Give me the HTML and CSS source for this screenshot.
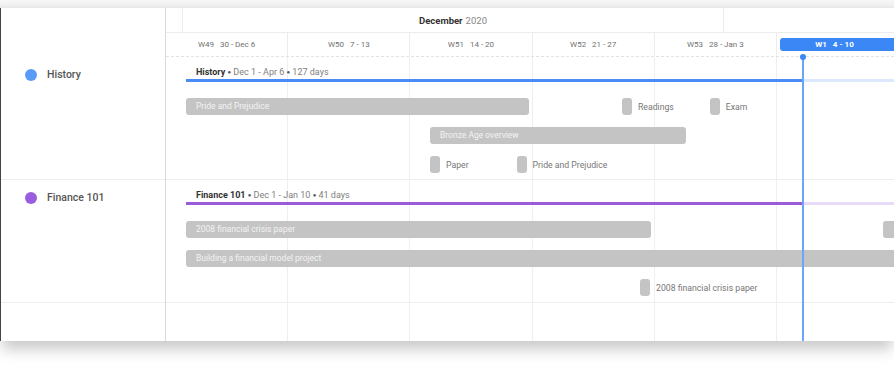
FILE: index.html
```html
<!DOCTYPE html>
<html>
<head>
<meta charset="utf-8">
<link rel="stylesheet" href="styles.css">
</head>
<body>
<div class="page">
  <div class="topstrip"></div>
  <div class="card">
    <aside class="side">
      <div class="side-head"></div>
      <div class="side-row"><span class="dot dot-blue"></span><span class="side-label">History</span></div>
      <div class="side-row"><span class="dot dot-purple"></span><span class="side-label">Finance 101</span></div>
      <div class="side-row side-empty"></div>
    </aside>
    <section class="timeline">
      <div class="month-row">
        <div class="m-cell m-pre"></div>
        <div class="m-cell m-dec"><b>December</b> 2020</div>
        <div class="m-cell m-jan"></div>
      </div>
      <div class="week-row">
        <div class="w-cell">W49&nbsp;&nbsp;&nbsp;30 - Dec 6</div>
        <div class="w-cell">W50&nbsp;&nbsp;&nbsp;7 - 13</div>
        <div class="w-cell">W51&nbsp;&nbsp;&nbsp;14 - 20</div>
        <div class="w-cell">W52&nbsp;&nbsp;&nbsp;21 - 27</div>
        <div class="w-cell">W53&nbsp;&nbsp;&nbsp;28 - Jan 3</div>
        <div class="w-cell w-current"><span class="w-pill">W1&nbsp;&nbsp;&nbsp;4 - 10</span></div>
      </div>
      <div class="body">
        <div class="grid">
          <div class="g-col"></div><div class="g-col"></div><div class="g-col"></div>
          <div class="g-col"></div><div class="g-col"></div><div class="g-col"></div>
        </div>
        <div class="today"><span class="today-dot"></span></div>

        <div class="row">
          <div class="summary"><b>History</b> <span class="sep">●</span> Dec 1 - Apr 6 <span class="sep">●</span> 127 days</div>
          <div class="span-line line-blue"></div>
          <div class="lanes">
            <div class="lane">
              <div class="bar" style="margin-left:20px;width:343px">Pride and Prejudice</div>
              <div class="ms" style="margin-left:93px"><span class="ms-box"></span>Readings</div>
              <div class="ms" style="margin-left:36px"><span class="ms-box"></span>Exam</div>
            </div>
            <div class="lane">
              <div class="bar" style="margin-left:264px;width:256px">Bronze Age overview</div>
            </div>
            <div class="lane">
              <div class="ms" style="margin-left:264px"><span class="ms-box"></span>Paper</div>
              <div class="ms" style="margin-left:48px"><span class="ms-box"></span>Pride and Prejudice</div>
            </div>
          </div>
        </div>

        <div class="row">
          <div class="summary"><b>Finance 101</b> <span class="sep">●</span> Dec 1 - Jan 10 <span class="sep">●</span> 41 days</div>
          <div class="span-line line-purple"></div>
          <div class="lanes">
            <div class="lane">
              <div class="bar" style="margin-left:20px;width:465px">2008 financial crisis paper</div>
              <div class="bar" style="margin-left:232px;width:40px"></div>
            </div>
            <div class="lane">
              <div class="bar" style="margin-left:20px;width:720px">Building a financial model project</div>
            </div>
            <div class="lane">
              <div class="ms" style="margin-left:474px"><span class="ms-box"></span>2008 financial crisis paper</div>
            </div>
          </div>
        </div>

        <div class="row row-empty"></div>
      </div>
    </section>
  </div>
</div>
</body>
</html>
```

FILE: styles.css
```css
* { box-sizing: border-box; }
html, body { margin: 0; padding: 0; background: #fff; }
body {
  font-family: Roboto, "Liberation Sans", Arial, sans-serif;
  width: 894px;
  height: 365px;
  overflow: hidden;
}
.page {
  width: 894px;
  height: 365px;
  background: #fff;
}
.topstrip {
  height: 8px;
  background: linear-gradient(#f7f7f7, #ededed);
  border-bottom: 1px solid #e9e9e9;
}
.card {
  display: flex;
  height: 333px;
  background: #fff;
  border-left: 1px solid #444;
  box-shadow: 0 10px 14px -2px rgba(0,0,0,0.22);
  position: relative;
  overflow: hidden;
}

/* side panel */
.side {
  width: 165px;
  flex: none;
  border-right: 1px solid #d9d9d9;
  display: flex;
  flex-direction: column;
}
.side-head { height: 49px; }
.side-row {
  height: 123px;
  border-bottom: 1px solid #eeeeee;
  display: flex;
  align-items: flex-start;
  padding: 12px 0 0 24px;
  gap: 10px;
}
.side-empty { height: 38px; border-bottom: none; }
.dot {
  width: 12px;
  height: 12px;
  border-radius: 50%;
  flex: none;
}
.dot-blue { background: #5b9bf8; }
.dot-purple { background: #9b5de0; }
.side-label {
  font-size: 10.5px;
  font-weight: 500;
  color: #555;
  line-height: 12px;
}

/* timeline */
.timeline {
  flex: 1;
  min-width: 0;
  display: flex;
  flex-direction: column;
  overflow: hidden;
}
.month-row {
  display: flex;
  height: 25px;
  border-bottom: 1px solid #ececec;
}
.m-cell {
  flex: none;
  border-right: 1px solid #ececec;
  font-size: 9.5px;
  color: #888;
  display: flex;
  align-items: center;
  justify-content: center;
}
.m-cell b { color: #333; font-weight: 700; margin-right: 3px; }
.m-pre { width: 17px; }
.m-dec { width: 541px; }
.m-jan { width: 200px; border-right: none; }

.week-row {
  display: flex;
  height: 24px;
  border-bottom: 1px dashed #e2e2e2;
}
.w-cell {
  flex: none;
  width: 122.2px;
  border-right: 1px solid #ececec;
  font-size: 8px;
  color: #707070;
  display: flex;
  align-items: center;
  justify-content: center;
  white-space: nowrap;
}
.w-current {
  border-right: none;
  padding: 0 0 0 3px;
  justify-content: flex-start;
}
.w-pill {
  display: flex;
  align-items: center;
  justify-content: center;
  width: 130px;
  height: 13px;
  border-radius: 3px;
  background: #3b87f5;
  color: #fff;
  font-weight: 700;
  font-size: 8px;
  padding-right: 10px;
}

.body {
  position: relative;
  flex: 1;
}
.grid {
  position: absolute;
  inset: 0;
  display: flex;
  pointer-events: none;
}
.g-col {
  flex: none;
  width: 122.2px;
  border-right: 1px solid #efefef;
}
.today {
  position: absolute;
  left: 636px;
  top: -2px;
  bottom: 0;
  width: 2px;
  background: #6ba6f9;
  z-index: 3;
}
.today-dot {
  position: absolute;
  left: -2px;
  top: -1px;
  width: 6px;
  height: 6px;
  border-radius: 50%;
  background: #3b87f5;
}

.row {
  position: relative;
  height: 123px;
  border-bottom: 1px solid #eeeeee;
  display: flex;
  flex-direction: column;
}
.row-empty { height: 38px; border-bottom: none; }
.summary {
  margin: 9px 0 0 30px;
  font-size: 9px;
  line-height: 11px;
  color: #808080;
  white-space: nowrap;
}
.summary b { color: #333; font-weight: 700; }
.sep { font-size: 6px; color: #555; vertical-align: 1px; }
.span-line {
  margin: 1px 0 0 20px;
  height: 3px;
  width: 708px;
}
.line-blue { background: linear-gradient(to right, #4a8cf5 0 616px, #dbe8fd 616px); }
.line-purple { background: linear-gradient(to right, #9b59dc 0 616px, #e8dcf8 616px); }

.lanes {
  margin-top: 16px;
  display: flex;
  flex-direction: column;
  gap: 12px;
}
.lane {
  display: flex;
  height: 17px;
  align-items: stretch;
}
.bar {
  flex: none;
  background: #c4c4c4;
  border-radius: 3px;
  color: #f3f3f3;
  font-size: 8.5px;
  line-height: 17px;
  padding-left: 10px;
  white-space: nowrap;
  overflow: hidden;
}
.ms {
  flex: none;
  display: flex;
  align-items: center;
  gap: 6px;
  font-size: 8.7px;
  color: #777;
  white-space: nowrap;
}
.ms-box {
  width: 10px;
  height: 17px;
  border-radius: 3px;
  background: #c4c4c4;
}
```
